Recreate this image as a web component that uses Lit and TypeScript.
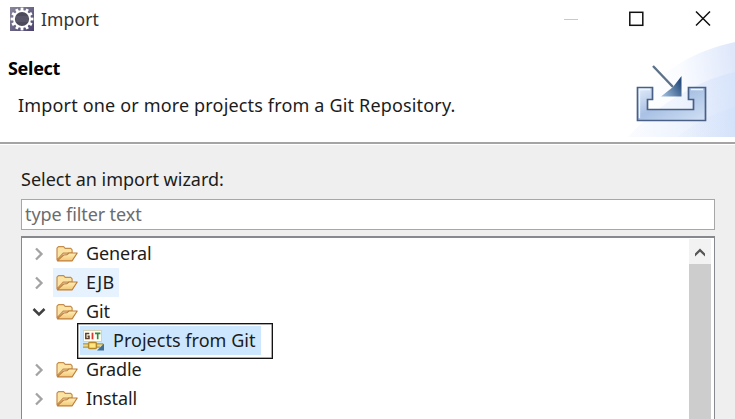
import { LitElement, html, svg, css } from "lit";
import { customElement } from "lit/decorators.js";

interface Entry {
  label: string;
  kind: string;
  state: "closed" | "open" | "leaf";
}

const entries: Entry[] = [
  { label: "General", kind: "general", state: "closed" },
  { label: "EJB", kind: "ejb", state: "closed" },
  { label: "Git", kind: "git", state: "open" },
  { label: "Projects from Git", kind: "projects", state: "leaf" },
  { label: "Gradle", kind: "gradle", state: "closed" },
  { label: "Install", kind: "install", state: "closed" },
];

const teeth = Array.from({ length: 12 }, (_, i) => i * 30);

const appIcon = html`<svg class="app-icon" width="24" height="24" viewBox="0 0 24 24">
  <defs>
    <linearGradient id="app" x1="0" y1="0" x2="1" y2="1">
      <stop offset="0" stop-color="#8a879b" /><stop offset="1" stop-color="#4b4370" />
    </linearGradient>
  </defs>
  <rect width="24" height="24" fill="url(#app)" />
  ${teeth.map((a) => svg`<rect x="10.6" y=".6" width="2.8" height="4" fill="#fff" transform="rotate(${a} 12 12)" />`)}
  <circle cx="12" cy="12" r="9" fill="#fff" />
  <circle cx="12" cy="12" r="7.1" fill="#4d4a5b" />
  <path d="M6 10h12M5.6 12h12.8M6 14h12" stroke="#6b687b" stroke-width=".8" />
</svg>`;

const folder = html`<svg class="glyph" width="24" height="20" viewBox="0 0 24 20">
  <defs>
    <linearGradient id="fold" x1="0" y1="0" x2="0" y2="1">
      <stop offset="0" stop-color="#fff1bd" /><stop offset="1" stop-color="#f4c672" />
    </linearGradient>
  </defs>
  <path d="M2 15.8V4.2L3.5 2.6H8.6L10.2 4.4H15.8L17.1 5.8V9.2H8.2Z" fill="#fbe3a4" stroke="#c68c4a" stroke-width="1.2" stroke-linejoin="round" />
  <path d="M2.5 16.6L8.6 11L12 10.6L14 9H22.2L17.2 16.8H2.5Z" fill="url(#fold)" stroke="#bd7d38" stroke-width="1.2" stroke-linejoin="round" />
</svg>`;

const gitIcon = html`<svg class="glyph" width="24" height="22" viewBox="0 0 24 22">
  <rect x="1.5" y=".5" width="18" height="11" fill="#fffef4" stroke="#d8d3b4" />
  <path d="M7.3 3.4H3.8V8.6H7V6.2H5.5" fill="none" stroke="#60402a" stroke-width="1.5" />
  <path d="M10.5 2.7V9.3" stroke="#d83a32" stroke-width="1.8" />
  <path d="M13 3.4H18.4M15.7 3.4V9.3" stroke="#2d8b3f" stroke-width="1.6" />
  <path d="M1 14H21M1 17H18" stroke="#b3943c" stroke-width="1.3" />
  <path d="M1 15.5H20" stroke="#f3d868" stroke-width="1.8" />
  <rect x="6.6" y="12.6" width="7.8" height="6" rx="1" fill="#ffe680" stroke="#b58928" stroke-width="1.5" />
  <path d="M22 13.5V20.5H15Z" fill="#426f91" />
</svg>`;

const banner = html`<svg class="banner" width="110" height="96" viewBox="0 0 110 96">
  <defs>
    <linearGradient id="sweep" x1="0" y1=".5" x2="1" y2=".4">
      <stop offset="0" stop-color="#fff" /><stop offset=".5" stop-color="#fafcff" /><stop offset="1" stop-color="#dfe8fb" />
    </linearGradient>
    <linearGradient id="low" x1="0" y1="0" x2="1" y2="0">
      <stop offset="0" stop-color="#dfe9fc" stop-opacity=".3" /><stop offset="1" stop-color="#d0e0fa" />
    </linearGradient>
    <linearGradient id="tray" x1="0" y1="0" x2="1" y2="1">
      <stop offset="0" stop-color="#e2ecfb" /><stop offset=".45" stop-color="#a9c1e4" /><stop offset="1" stop-color="#d1e1f5" />
    </linearGradient>
    <linearGradient id="head" x1="0" y1="1" x2="1" y2=".4">
      <stop offset="0" stop-color="#a9c8e7" /><stop offset="1" stop-color="#294e7e" />
    </linearGradient>
  </defs>
  <path d="M110 1C77 8 48 23 29 42C14 58 6 77 3 96H110Z" fill="url(#sweep)" />
  <path d="M110 31C78 38 35 60 3 96H110Z" fill="url(#low)" opacity=".55" />
  <path d="M110 66C88 72 70 82 52 96H110Z" fill="url(#low)" opacity=".5" />
  <path d="M12.5 46.5H27.5V58.5H22.5V68.5H68.5V58.5H63.5V46.5H80.5V79.5H12.5Z" fill="url(#tray)" stroke="#4a5f85" stroke-width="1.7" />
  <path d="M14.5 77V48.5H25M66 48.5H78" fill="none" stroke="#edf5ff" stroke-width="1.3" />
  <path d="M28 25L48 46" stroke="#5d7189" stroke-width="2.4" />
  <path d="M56.5 35V55.5H36L48 46Z" fill="url(#head)" />
</svg>`;

const closedArrow = html`<svg width="12" height="16" viewBox="0 0 12 16"><path d="M3 2.5L8.5 8L3 13.5" fill="none" stroke="#a3a3a3" stroke-width="2.3" /></svg>`;
const openArrow = html`<svg width="14" height="12" viewBox="0 0 14 12"><path d="M1.5 3L7 8.5L12.5 3" fill="none" stroke="#404040" stroke-width="2.5" /></svg>`;

@customElement("app-root")
export class AppRoot extends LitElement {
  static styles = css`
    :host { display: flex; flex-direction: column; width: 735px; height: 419px; overflow: hidden; background: #efefef; color: #1c1c1c; font: 18px/28px "Noto Sans", "Open Sans", sans-serif; white-space: nowrap; }
    * { box-sizing: border-box; }
    svg { display: block; flex: none; }
    .title { display: flex; height: 41px; background: #fff; padding: 7px 23px 0 10px; flex: none; }
    .name { margin-left: 7px; line-height: 25px; color: #333; font-size: 17.5px; letter-spacing: .15px; flex: 1; }
    .header { height: 101px; display: flex; justify-content: space-between; background: #fff; flex: none; }
    .copy { padding: 13px 0 0 8px; }
    .heading { font-weight: 700; color: #000; font-size: 18px; letter-spacing: -.3px; }
    .detail { margin: 9px 0 0 10px; letter-spacing: .165px; }
    .rule { height: 3px; border-top: 2px solid #a4a4a4; background: #fff; flex: none; }
    .body { flex: 1; padding: 20px 20px 0 21px; display: flex; flex-direction: column; min-height: 0; }
    .filter { height: 31px; flex: none; margin-top: 6px; border: 1px solid #a7a7a7; background: #fff; padding-left: 3px; line-height: 28px; color: #6c6c6c; letter-spacing: -.1px; }
    .tree { flex: 1; min-height: 0; margin-top: 6px; border: 1px solid #868a8e; border-width: 2px 1px 0 1px; background: #fff; display: flex; }
    .rows { flex: 1; padding-top: 1px; }
    .row { display: flex; height: 29px; }
    .toggle { width: 31px; display: flex; align-items: center; padding-left: 11px; }
    .toggle.open { padding-left: 10px; }
    .cell { display: flex; height: 29px; align-items: center; padding: 0 5px 0 2px; gap: 7px; }
    .text { margin-top: -2px; letter-spacing: -.1px; }
    .ejb .text { letter-spacing: .2px; }
    .cell.ejb { background: #e6f3fe; }
    .cell.projects { background: #cde7fe; margin-left: 27px; padding: 0 5px 0 2px; position: relative; }
    .projects .text { letter-spacing: .03px; }
    .frame { position: absolute; left: -3px; top: -3px; width: 196px; height: 36px; border: 1px solid #141414; box-shadow: inset 0 0 0 .5px #555; }
    .scroll { width: 22px; margin: 1px 3px 0 0; background: #cdcdcd; }
    .up { height: 25px; background: #f2f2f2; display: flex; justify-content: center; padding-top: 8px; }
  `;

  private row(e: Entry) {
    return html`<div class="row">
      <div class="toggle ${e.state}">${e.state === "closed" ? closedArrow : e.state === "open" ? openArrow : ""}</div>
      <div class="cell ${e.kind}">
        ${e.state === "leaf" ? gitIcon : folder}<span class="text">${e.label}</span>
        ${e.state === "leaf" ? html`<div class="frame"></div>` : ""}
      </div>
    </div>`;
  }

  render() {
    return html`
      <div class="title">
        ${appIcon}
        <div class="name">Import</div>
        <svg width="150" height="24" viewBox="0 0 150 24">
          <path d="M2 12.5H16" stroke="#c9c9c9" />
          <rect x="67.8" y="5.3" width="13" height="13" fill="none" stroke="#111" stroke-width="1.5" />
          <path d="M134 4.5L148 18.5M148 4.5L134 18.5" stroke="#111" stroke-width="1.5" />
        </svg>
      </div>
      <div class="header">
        <div class="copy">
          <div class="heading">Select</div>
          <div class="detail">Import one or more projects from a Git Repository.</div>
        </div>
        ${banner}
      </div>
      <div class="rule"></div>
      <div class="body">
        <div class="label">Select an import wizard:</div>
        <div class="filter">type filter text</div>
        <div class="tree">
          <div class="rows">${entries.map((e) => this.row(e))}</div>
          <div class="scroll">
            <div class="up"><svg width="12" height="12" viewBox="0 0 12 12"><path d="M1 9.5V6.5L6 1.5L11 6.5V9.5L6 4.8Z" fill="#555" /></svg></div>
          </div>
        </div>
      </div>`;
  }
}
